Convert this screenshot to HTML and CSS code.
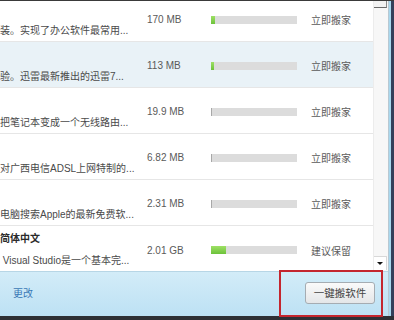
FILE: index.html
```html
<!DOCTYPE html>
<html lang="zh-CN">
<head>
  <meta charset="UTF-8" />
  <title>软件搬家</title>
  <link rel="stylesheet" href="styles.css">
</head>
<body>
  <div class="window">
    <div class="topline"></div>
    <div class="middle">
      <div class="content">
        <div class="main">
          <div class="list">
            <div class="rows">
              <div class="row">
                <div class="name"><span class="title"></span><span class="desc">装。实现了办公软件最常用...</span></div>
                <div class="size">170 MB</div>
                <div class="bar"><div class="fill green" style="width:4px"></div></div>
                <div class="action">立即搬家</div>
              </div>
              <div class="row selected">
                <div class="name"><span class="title"></span><span class="desc">验。迅雷最新推出的迅雷7...</span></div>
                <div class="size">113 MB</div>
                <div class="bar"><div class="fill green" style="width:3px"></div></div>
                <div class="action">立即搬家</div>
              </div>
              <div class="row">
                <div class="name"><span class="title"></span><span class="desc">把笔记本变成一个无线路由...</span></div>
                <div class="size">19.9 MB</div>
                <div class="bar"><div class="fill grey" style="width:1px"></div></div>
                <div class="action">立即搬家</div>
              </div>
              <div class="row">
                <div class="name"><span class="title"></span><span class="desc">对广西电信ADSL上网特制的...</span></div>
                <div class="size">6.82 MB</div>
                <div class="bar"><div class="fill grey" style="width:1px"></div></div>
                <div class="action">立即搬家</div>
              </div>
              <div class="row">
                <div class="name"><span class="title"></span><span class="desc">电脑搜索Apple的最新免费软...</span></div>
                <div class="size">2.31 MB</div>
                <div class="bar"><div class="fill grey" style="width:1px"></div></div>
                <div class="action">立即搬家</div>
              </div>
              <div class="row last">
                <div class="name"><span class="title">简体中文</span><span class="desc">&nbsp;Visual Studio是一个基本完...</span></div>
                <div class="size">2.01 GB</div>
                <div class="bar"><div class="fill green" style="width:15px"></div></div>
                <div class="action">建议保留</div>
              </div>
            </div>
          </div>
          <div class="scrollbar">
            <div class="thumb"></div>
            <div class="track"></div>
            <div class="arrow-down"><span class="tri"></span></div>
          </div>
        </div>
        <div class="footer">
          <a class="change" href="#">更改</a>
          <button class="move-all">一键搬软件</button>
          <div class="mark-box"></div>
        </div>
      </div>
      <div class="frame"></div>
    </div>
    <div class="bottomline"></div>
  </div>
</body>
</html>
```

FILE: styles.css
```css
body { margin:0; background:#fff; font-family:'Liberation Sans','Noto Sans CJK SC',sans-serif; font-size:10px; color:#444; }
.window { width:394px; height:320px; display:flex; flex-direction:column; overflow:hidden; }
.topline { height:1px; background:#3a3a3a; }
.bottomline { height:4px; background:#2e3035; }
.middle { flex:1; display:flex; min-height:0; }
.content { flex:1; display:flex; flex-direction:column; min-width:0; }
.frame { width:6px; background:linear-gradient(to right,#b8c8d2 0,#b8c8d2 1px,#a9d8ee 1px,#a9d8ee 3px,#34405a 3px); }

.main { height:270px; display:flex; background:#fff; }
.list { flex:1; overflow:hidden; }
.rows { margin-top:-5px; }
.row { height:46px; box-sizing:border-box; border-bottom:1px solid #e6e6e6; display:grid; grid-template-columns:147px 64px 86px 1fr; align-items:center; padding-top:2px; }
.row.selected { background:#e9f2f7; }
.row.last { border-bottom:none; }
.name { display:flex; flex-direction:column; align-self:start; padding-top:4px; white-space:nowrap; overflow:hidden; }
.title { height:14px; line-height:14px; font-weight:bold; color:#2a2a2a; }
.desc { height:14px; line-height:14px; margin-top:8px; color:#4a4a4a; }
.size { color:#5a5a5a; }
.bar { height:8px; background:#dcdcdc; display:flex; }
.fill { height:100%; }
.fill.green { background:linear-gradient(#9ee065,#6cc23a); }
.fill.grey { background:#a8a8a8; }
.action { padding-left:14px; color:#5a5a5a; font-size:10px; }

.scrollbar { width:15px; display:flex; flex-direction:column; background:#f7f7f7; border-left:1px solid #ececec; box-sizing:border-box; }
.thumb { height:6px; border-bottom:1px solid #6a6a6a; border-right:1px solid #8a8a8a; background:#f2f2f2; margin-right:1px; }
.track { flex:1; }
.arrow-down { height:13px; border-top:1px solid #d8d8d8; border-right:1px solid #d8d8d8; background:#fff; margin-right:1px; margin-bottom:1px; display:flex; align-items:center; justify-content:center; }
.tri { width:0; height:0; border-left:3px solid transparent; border-right:3px solid transparent; border-top:3px solid #111; }

.footer { flex:1; position:relative; display:flex; align-items:center; justify-content:space-between; padding:0 13px 3px 13px; background:linear-gradient(#d3ecf8,#bde1f4); border-top:1px solid #b7d6e6; }
.change { color:#3a78b5; text-decoration:none; font-size:10px; }
.move-all { width:70px; height:22px; padding:0; border:1px solid #a5acb2; border-radius:3px; background:linear-gradient(#fafafa,#e4e6e8); color:#444; font-family:'Noto Sans CJK SC',sans-serif; font-size:10.5px; }
.mark-box { position:absolute; left:279px; top:-2px; width:104px; height:47px; box-sizing:border-box; border:2px solid #c4262e; }
```
